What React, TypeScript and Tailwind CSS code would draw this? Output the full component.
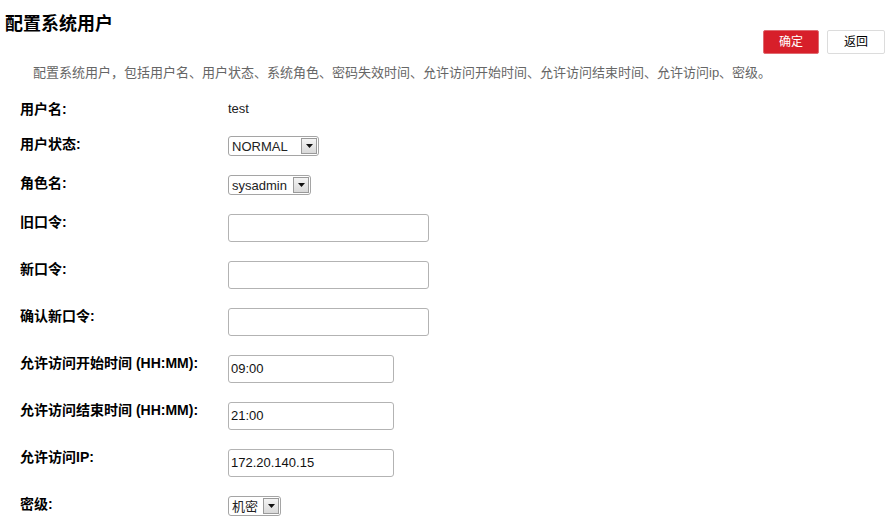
import React from "react";

const font = { fontFamily: '"Liberation Sans", Arial, "Noto Sans CJK SC", sans-serif' };

function Select({ value, width }: { value: string; width: number }) {
  return (
    <div
      className="flex h-[20px] items-center justify-between rounded-[3px] border border-[#a5a5a5] bg-white pl-[3px] pr-[1px] text-[13px] leading-none text-[#222]"
      style={{ width }}
    >
      <span>{value}</span>
      <span className="flex h-[16px] w-[16px] items-center justify-center border border-[#9a9a9a] bg-gradient-to-b from-[#f4f4f4] to-[#d9d9d9]">
        <svg width="7" height="4" viewBox="0 0 7 4">
          <path d="M0 0h7L3.5 4z" fill="#111" />
        </svg>
      </span>
    </div>
  );
}

function TextInput({ value, width }: { value?: string; width: number }) {
  return (
    <div
      className="flex h-[28px] items-center rounded-[3px] border border-[#b3b3b3] bg-white pl-[2px] text-[13px] text-[#111]"
      style={{ width }}
    >
      {value}
    </div>
  );
}

function Row({ label, children }: { label: string; children: React.ReactNode }) {
  return (
    <div className="flex items-start">
      <div className="w-[208px] shrink-0 text-[14px] font-bold leading-[16px] text-black">{label}</div>
      <div className="text-[13px] leading-[16px]">{children}</div>
    </div>
  );
}

export default function App() {
  return (
    <div className="h-[526px] w-[892px] bg-white" style={font}>
      <div className="flex items-start justify-between pl-[5px] pr-[7px] pt-[13px]">
        <h1 className="text-[18px] font-bold leading-[22px] text-black">配置系统用户</h1>
        <div className="mt-[17px] flex gap-[8px]">
          <button className="h-[24px] w-[56px] rounded-[2px] border border-[#e06a70] bg-[#d71f2a] text-[12px] text-white">
            确定
          </button>
          <button className="h-[24px] w-[58px] rounded-[2px] border border-[#dcdcdc] bg-white text-[12px] text-black">
            返回
          </button>
        </div>
      </div>
      <p className="mt-[11px] pl-[33px] text-[13px] leading-[16px] text-[#666]">
        配置系统用户，包括用户名、用户状态、系统角色、密码失效时间、允许访问开始时间、允许访问结束时间、允许访问ip、密级。
      </p>
      <div className="mt-[20px] flex flex-col gap-[19px] pl-[20px]">
        <Row label="用户名:">
          <span className="text-[#222]">test</span>
        </Row>
        <Row label="用户状态:">
          <Select value="NORMAL" width={91} />
        </Row>
        <Row label="角色名:">
          <Select value="sysadmin" width={83} />
        </Row>
        <Row label="旧口令:">
          <TextInput width={201} />
        </Row>
        <Row label="新口令:">
          <TextInput width={201} />
        </Row>
        <Row label="确认新口令:">
          <TextInput width={201} />
        </Row>
        <Row label="允许访问开始时间 (HH:MM):">
          <TextInput value="09:00" width={166} />
        </Row>
        <Row label="允许访问结束时间 (HH:MM):">
          <TextInput value="21:00" width={166} />
        </Row>
        <Row label="允许访问IP:">
          <TextInput value="172.20.140.15" width={166} />
        </Row>
        <Row label="密级:">
          <Select value="机密" width={53} />
        </Row>
      </div>
    </div>
  );
}
